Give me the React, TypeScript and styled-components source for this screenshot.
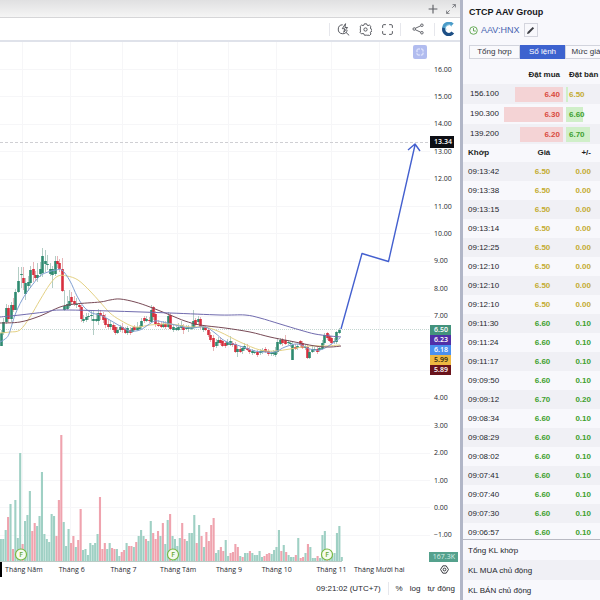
import React from "react";
import styled, { createGlobalStyle } from "styled-components";

const Global = createGlobalStyle`
  * { box-sizing: border-box; }
  body { margin: 0; background: #fff; color: #25262c; font: 8px/12px "Liberation Sans", Arial, sans-serif; }
  button { font: inherit; color: inherit; border: 0; padding: 0; background: none; cursor: pointer; }
`;

const Page = styled.div`
  display: flex;
  min-height: 100vh;
  overflow: hidden;
`;
const ChartPane = styled.main`
  flex: 1;
  min-width: 0;
  display: flex;
  flex-direction: column;
`;
const WindowBar = styled.header`
  height: 18px;
  display: flex;
  align-items: center;
  justify-content: flex-end;
  gap: 6px;
  padding-right: 3px;
  background: linear-gradient(#e0e0e1, #f5f5f5);
  border-bottom: 1px solid #d6d6d8;
  color: #5c5e64;
`;
const Toolbar = styled.div`
  height: 24px;
  display: flex;
  align-items: center;
  justify-content: flex-end;
  border-bottom: 2px solid #dfe2ea;
  color: #55575e;
`;
const IconButton = styled.button<{ $w?: number }>`
  width: ${(p) => p.$w ?? 22}px;
  height: 14px;
  display: flex;
  align-items: center;
  justify-content: center;
`;
const Divider = styled.span<{ $gap?: number }>`
  width: 1px;
  height: 13px;
  margin: 0 ${(p) => p.$gap ?? 2}px;
  background: #e6e7ec;
`;
const ChartBody = styled.div`
  flex: 1;
  min-height: 520px;
  display: grid;
  grid-template-columns: 1fr 30px;
`;
const Plot = styled.div`
  position: relative;
  min-width: 0;
`;
const PlotSvg = styled.svg`
  position: absolute;
  inset: 0;
  width: 100%;
  height: 100%;
`;
const PaneButton = styled.button`
  position: absolute;
  right: 3px;
  top: 3px;
  width: 14px;
  height: 14px;
  border-radius: 2px;
  background: #b1bcef;
  display: flex;
  align-items: center;
  justify-content: center;
`;
const PriceScale = styled.div`
  position: relative;
  display: grid;
  grid-auto-rows: 1fr;
  align-items: center;
  padding: 14px 0 13px 4px;
  font: 500 7px/10px "Open Sans", sans-serif;
`;
const TagStack = styled.div<{ $top: number; $w?: number }>`
  position: absolute;
  left: 0;
  top: ${(p) => p.$top}%;
  width: ${(p) => p.$w ?? 21}px;
  font-weight: 600;
`;
const Tag = styled.div<{ $bg: string; $fg?: string; $h?: number }>`
  height: ${(p) => p.$h ?? 10}px;
  line-height: ${(p) => p.$h ?? 10}px;
  padding-left: 4px;
  background: ${(p) => p.$bg};
  color: ${(p) => p.$fg ?? "#fff"};
`;
const VolumeTag = styled.div`
  position: absolute;
  right: 2px;
  bottom: 0;
  width: 29px;
  height: 10px;
  padding-right: 3px;
  text-align: right;
  background: #55a18d;
  color: #d9f0e8;
`;
const TimeAxis = styled.div`
  height: 15px;
  display: grid;
  grid-template-columns:
    minmax(0, 44fr) minmax(0, 52fr) minmax(0, 52fr) minmax(0, 58fr) minmax(0, 44fr)
    minmax(0, 52fr) minmax(0, 58fr) minmax(0, 38fr) minmax(0, 32fr) 30px;
  align-items: center;
  justify-items: center;
  white-space: nowrap;
  border-left: 2px solid #000;
  font: 500 7px/12px "Open Sans", sans-serif;
`;
const AxisGear = styled.button`
  grid-column: 10;
  display: flex;
`;
const StatusBar = styled.footer`
  height: 23px;
  display: flex;
  align-items: center;
  justify-content: flex-end;
  gap: 7px;
  padding-right: 5px;
`;
const Splitter = styled.div`
  width: 3px;
  background: #b1b6c7;
`;
const SidePanel = styled.aside`
  width: 137px;
  flex: none;
  display: flex;
  flex-direction: column;
  overflow: hidden;
  background: #f8f8fc;
`;
const Title = styled.h1`
  margin: 6px 0 5px 6px;
  font-size: 9px;
  line-height: 12px;
  color: #15161b;
`;
const SymbolRow = styled.div`
  display: flex;
  align-items: center;
  height: 14px;
  margin-left: 6px;
  gap: 3px;
  font-size: 9px;
`;
const SymbolLink = styled.a`
  color: #4763b0;
  text-decoration: none;
`;
const EditButton = styled.button`
  width: 14px;
  height: 14px;
  margin-left: 1px;
  border: 1px solid #d4d5de;
  display: flex;
  align-items: center;
  justify-content: center;
`;
const Tabs = styled.div`
  display: flex;
  flex: none;
  margin: 8px 0 7px 6px;
`;
const Tab = styled.button<{ $w: number; $on?: boolean }>`
  flex: 0 0 ${(p) => p.$w}px;
  height: 14px;
  line-height: 12px;
  white-space: nowrap;
  border: 1px solid ${(p) => (p.$on ? "#3d63cf" : "#d2d4dd")};
  background: ${(p) => (p.$on ? "#3d63cf" : "#f9f9fc")};
  color: ${(p) => (p.$on ? "#fff" : "#33353c")};
`;
const Table = styled.table`
  flex: none;
  width: 100%;
  border-collapse: collapse;
  table-layout: fixed;
  white-space: nowrap;
  th, td { padding: 0; }
`;
const HeadCell = styled.th<{ $align?: string; $pad?: number }>`
  && {
    height: 18px;
    text-align: ${(p) => p.$align ?? "left"};
    padding-left: ${(p) => (p.$align ? 0 : p.$pad ?? 5)}px;
    padding-right: ${(p) => (p.$align ? p.$pad ?? 0 : 0)}px;
    color: #1c1d22;
  }
`;
const BookRow = styled.tr`
  height: 20px;
  &:nth-child(odd) { background: #f0f0f5; }
`;
const TradeRow = styled.tr`
  height: 19px;
  &:nth-child(odd) { background: #f0f0f5; }
`;
const TextCell = styled.td<{ $pad?: number }>`
  && { padding-left: ${(p) => p.$pad ?? 5}px; }
`;
const tone = { ref: "#c4ac32", up: "#3fa02f", down: "#d94a40" };
type Tone = keyof typeof tone;
const NumberCell = styled.td<{ $tone: Tone; $pad?: number }>`
  && { padding-right: ${(p) => p.$pad ?? 0}px; }
  text-align: right;
  font-weight: bold;
  color: ${(p) => tone[p.$tone]};
`;
const Depth = styled.div<{ $side: "bid" | "ask"; $size: number; $tone: Tone }>`
  height: 15px;
  line-height: 15px;
  font-weight: bold;
  color: ${(p) => tone[p.$tone]};
  text-align: ${(p) => (p.$side === "bid" ? "right" : "left")};
  padding: 0 3px;
  margin-right: ${(p) => (p.$side === "bid" ? 1 : 0)}px;
  margin-left: ${(p) => (p.$side === "bid" ? 0 : 2)}px;
  background: linear-gradient(${(p) => (p.$side === "bid" ? "#f4d3d5, #f4d3d5" : "#d0efc9, #d0efc9")})
    ${(p) => (p.$side === "bid" ? "right" : "left")} / ${(p) => p.$size}px 100% no-repeat;
`;
const TradeArea = styled.div`
  flex: 1 0 395px;
  height: 395px;
  overflow: hidden;
`;
const Totals = styled.div`
  flex: none;
  border-top: 1px solid #b9bac3;
  background: #f8f8fc;
`;
const TotalRow = styled.div`
  height: 20px;
  line-height: 22px;
  padding-left: 5px;
  &:nth-child(even) { background: #f0f0f5; }
`;

const months: [string, number][] = [
  ["Tháng Năm", 22], ["Tháng 6", 70], ["Tháng 7", 122], ["Tháng Tám", 177],
  ["Tháng 9", 228], ["Tháng 10", 276], ["Tháng 11", 331], ["Tháng Mười hai", 379],
];

const volume =
  "g22 g22 g31 r44 g57 r12 g61 g23 g108 r17 g40 g46 g70 r30 r38 g35 g45 g89 g27 g22 g19 g47 g45 r25 r61 r126 g39 g15 g32 r18 r25 g14 r21 r52 g11 g12 g6 g18 g16 g18 g27 r64 r12 r18 g12 g18 r13 r12 g12 g5 r9 r11 g18 r15 r15 g14 r19 g25 g31 g25 r22 g20 g40 r28 r22 r30 g25 r38 g17 g41 r47 g25 g22 g15 g23 r38 r22 g20 g28 g28 g46 r18 g36 r25 g14 r29 r20 r36 r43 g8 g11 r14 r10 g21 g5 r8 r9 r17 r14 g5 r4 g8 g8 r10 g8 g6 g6 g10 g4 r5 r7 r8 g7 g11 g14 g31 r10 g16 r9 g6 g4 g4 r6 g23 r3 r4 g8 r17 g14 g3 g3 r5 g3 g26 g30 r10 g5 g5 g8 g28 g35 g4".split(" ");

// x, direction, body top, body bottom, wick top, wick bottom
const candles: [number, string, number, number, number, number][] = [
  [1,"g",333,346,330,346],[3,"g",322,333,318,335],[6,"g",308,322,304,324],[8,"r",308,319,305,323],[11,"g",305,319,302,322],[13,"r",305,310,298,312],
  [15,"g",292,310,289,310],[18,"g",281,292,267,293],[21,"g",274,275,267,288],[23,"r",278,283,267,290],[25,"g",283,294,278,300],[28,"g",282,286,276,291],
  [30,"g",270,283,266,288],[33,"r",269,275,262,282],[35,"r",275,278,271,281],[37,"g",275,278,263,282],[40,"g",269,274,262,277],[42,"g",256,273,248,277],
  [45,"g",261,264,250,272],[47,"g",264,265,255,270],[50,"g",269,274,263,276],[52,"g",269,275,266,288],[55,"g",261,274,256,276],[57,"r",261,264,256,268],
  [59,"r",263,269,259,272],[62,"r",269,291,258,292],[64,"g",306,310,290,311],[67,"g",304,309,296,310],[69,"g",301,306,290,308],[71,"r",297,302,292,305],
  [74,"r",301,304,296,306],[76,"g",304,305,298,308],[79,"r",305,307,303,311],[81,"r",307,319,305,322],[83,"g",319,321,315,323],[86,"g",317,320,313,322],
  [88,"g",316,317,313,320],[91,"g",315,316,311,321],[93,"g",319,321,310,335],[96,"g",319,321,313,322],[98,"g",313,321,309,325],[100,"r",313,316,310,320],
  [103,"r",315,320,312,323],[105,"r",318,325,314,328],[108,"r",324,327,319,329],[110,"g",324,327,320,329],[113,"r",325,330,323,332],[115,"r",327,333,325,335],
  [117,"g",330,333,327,334],[120,"g",327,330,325,332],[122,"r",327,330,323,333],[125,"r",329,333,327,334],[127,"g",328,333,326,335],[130,"r",330,333,327,335],
  [132,"g",328,332,327,333],[134,"r",327,330,325,331],[137,"g",327,330,322,331],[139,"g",327,329,325,330],[141,"g",321,327,318,329],[144,"r",318,321,316,323],
  [146,"g",319,321,316,322],[149,"r",320,321,317,323],[151,"g",310,322,305,323],[153,"r",307,317,306,320],[155,"r",314,324,311,327],[158,"r",323,326,320,327],
  [161,"r",324,327,322,328],[163,"g",324,327,321,328],[165,"r",324,327,321,329],[168,"g",316,327,312,328],[170,"r",315,329,313,330],[173,"g",327,330,324,332],
  [176,"g",328,330,326,331],[178,"g",327,330,323,331],[181,"g",325,328,321,330],[183,"r",327,330,324,334],[186,"g",328,329,325,330],[188,"g",327,329,325,332],
  [191,"g",327,329,323,330],[193,"g",321,328,310,329],[195,"r",320,325,318,327],[198,"g",319,322,316,324],[200,"r",319,327,317,329],[203,"g",327,330,325,332],
  [205,"r",327,330,325,331],[208,"r",330,335,328,337],[210,"r",335,340,332,342],[213,"r",338,347,335,351],[216,"g",342,346,339,348],[218,"g",340,343,337,346],
  [220,"r",340,343,337,345],[222,"r",341,346,339,347],[225,"r",343,346,341,348],[227,"g",342,345,339,346],[230,"g",341,345,336,346],[232,"r",343,345,341,347],
  [235,"r",344,352,342,353],[237,"g",349,352,346,357],[240,"r",349,352,346,353],[242,"g",348,351,346,354],[244,"g",346,349,343,351],[247,"r",348,350,344,351],
  [249,"r",350,352,347,354],[252,"g",351,353,349,355],[254,"g",352,353,350,354],[257,"r",352,355,350,357],[260,"g",351,353,349,355],[262,"g",350,352,348,354],
  [265,"r",349,352,347,353],[268,"r",351,354,349,356],[271,"g",353,354,351,356],[273,"g",352,354,350,356],[275,"g",351,355,347,357],[277,"g",342,352,338,354],
  [280,"g",340,344,338,345],[282,"r",340,343,338,346],[285,"r",340,344,335,345],[288,"g",342,343,340,345],[290,"g",343,344,341,347],[292,"g",345,360,342,360],
  [295,"r",347,349,344,350],[297,"g",346,348,344,350],[300,"r",341,345,340,348],[302,"r",343,348,341,349],[305,"g",347,348,344,350],[307,"r",347,358,345,359],
  [309,"g",352,358,349,359],[312,"g",349,352,346,353],[314,"g",349,350,347,352],[317,"r",349,352,347,354],[319,"g",348,350,346,352],[322,"g",343,349,340,350],
  [324,"g",335,343,333,345],[327,"r",333,338,332,340],[329,"r",336,341,334,342],[331,"r",338,343,336,345],[334,"g",341,342,338,344],[336,"g",332,342,331,344],[339,"g",330,333,328,334],
];

type Pt = [number, number];
const averages: { color: string; pts: Pt[] }[] = [
  { color: "#e4d184", pts: [[0,333],[10,332],[20,330],[30,317],[40,300],[50,284],[58,276],[67,276],[78,280],[90,291],[100,302],[110,313],[120,320],[135,327],[150,325],[170,324],[190,327],[205,327],[220,332],[240,342],[260,350],[275,351],[290,349],[310,346],[325,346],[340,345]] },
  { color: "#7f9fd2", pts: [[0,342],[5,339],[9,334],[15,315],[22,300],[30,288],[40,276],[48,272],[56,270],[62,270],[70,281],[77,296],[84,307],[92,313],[100,315],[108,319],[120,326],[130,331],[140,330],[148,325],[155,321],[163,322],[175,325],[190,328],[205,327],[215,333],[225,341],[240,346],[255,351],[265,352],[275,352],[285,347],[298,344],[310,349],[320,350],[330,345],[340,338]] },
  { color: "#784a56", pts: [[0,323],[20,322],[40,316],[60,307],[75,304],[100,302],[110,300],[120,299],[135,302],[150,307],[170,315],[185,321],[200,325],[225,328],[250,332],[270,337],[290,341],[315,346],[330,347],[341,346]] },
  { color: "#706bae", pts: [[0,317],[20,315],[45,312],[60,310],[110,311],[170,313],[220,315],[245,315],[260,318],[280,324],[300,330],[315,334],[330,336],[341,337]] },
];

const smooth = (pts: Pt[]) =>
  pts.reduce((d, [x, y], i) => {
    if (i === 0) return `M${x} ${y}`;
    const a = pts[i - 2] ?? pts[i - 1];
    const b = pts[i - 1];
    const c = pts[i + 1] ?? pts[i];
    return `${d}C${b[0] + (x - a[0]) / 6} ${b[1] + (y - a[1]) / 6} ${x - (c[0] - b[0]) / 6} ${y - (c[1] - b[1]) / 6} ${x} ${y}`;
  }, "");

const Chart = () => (
  <PlotSvg viewBox="0 42 430 520" preserveAspectRatio="none" fill="none" role="img" aria-label="AAV:HNX">
    <g stroke="#f6f6f8">
      {Array.from({ length: 18 }, (_, i) => <path key={i} d={`M0 ${Math.round(69 + i * 27.4) + 0.5}H430`} />)}
      {months.map(([m, x]) => <path key={m} d={`M${x + 0.5} 42V562`} />)}
    </g>
    <path d="M0 142.5H430" stroke="#cfcfd3" strokeDasharray="3 2" />
    <path d="M0 329.5H430" stroke="#c4d6d1" strokeDasharray="1 1" />
    {volume.map((v, i) => (
      <rect key={i} x={i * 2.418 - 0.2} y={561 - +v.slice(1)} width="2.1" height={+v.slice(1)} fill={v[0] === "g" ? "#9fd0c4" : "#efa3ae"} />
    ))}
    {candles.map(([x, c, t, b, wt, wb]) => (
      <g key={x} fill={c === "g" ? "#2f8a70" : "#d8303f"} stroke={c === "g" ? "#9fc0b6" : "#dfa3a6"}>
        <path d={`M${x + 0.5} ${wt}V${wb}`} strokeWidth="0.8" />
        <rect x={x - 0.8} y={t} width="2.6" height={b - t} stroke="none" />
      </g>
    ))}
    {averages.map((a) => <path key={a.color} d={smooth(a.pts)} stroke={a.color} />)}
    <path d="M341 329L362 253.5L388.5 261.5L415 145M408 150L415 144L420 151" stroke="#4460cf" strokeWidth="1.4" strokeLinejoin="round" />
    {[21, 173, 327].map((x) => (
      <g key={x}>
        <circle cx={x} cy="554.5" r="5.5" fill="#f5fbef" stroke="#78b843" strokeWidth="1.2" />
        <text x={x} y="557" textAnchor="middle" fontSize="7" fontWeight="600" fontFamily="Open Sans, sans-serif" fill="#65a732">F</text>
      </g>
    ))}
    <path d="M0 561.5H342" stroke="#b9cbc5" />
  </PlotSvg>
);

const svg = (size: number, children: React.ReactNode) => (
  <svg width={size} height={size} viewBox="0 0 16 16" fill="none" stroke="currentColor" strokeWidth="1.2" aria-hidden="true">{children}</svg>
);
const gear = <><path d="M6.6 1h2.8l.6 1.7 1.1.5 1.700-.7 1.900 1.900-.7 1.700.4 1.100 1.600.8v2l-1.600.8-.4 1.100.7 1.700-1.900 1.900-1.700-.7-1.100.5L9.400 15H6.600L6 13.300l-1.100-.5-1.700.7-1.900-1.900.7-1.700-.4-1.100V7.200L2 6.100l-.7-1.700 1.900-1.900 1.700.7L6 2.700z" /><circle cx="8" cy="8" r="2" /></>;

const prices = Array.from({ length: 18 }, (_, i) => 16 - i);
const label = (p: number) => (p === 6 || p === 5 ? "" : `${p < 0 ? "−" : ""}${Math.abs(p)}.00`);

const book: [string, string, number, string, number, Tone][] = [
  ["156.100", "6.40", 48, "6.50", 2, "ref"],
  ["190.300", "6.30", 59, "6.60", 17, "up"],
  ["139.200", "6.20", 43, "6.70", 24, "up"],
];
const trades: [string, string, string][] = [
  ...["13:42", "13:38", "13:15", "13:14", "12:25", "12:10", "12:10", "12:10"].map((t) => [t, "6.50", "0.00"] as [string, string, string]),
  ...["11:30", "11:24", "11:17", "09:50"].map((t) => [t, "6.60", "0.10"] as [string, string, string]),
  ["09:12", "6.70", "0.20"],
  ...["08:34", "08:29", "08:02", "07:41", "07:40", "07:30", "06:57"].map((t) => [t, "6.60", "0.10"] as [string, string, string]),
];

export default function App() {
  return (
    <Page>
      <Global />
      <ChartPane>
        <WindowBar>
          <IconButton $w={12} aria-label="Thêm">{svg(10, <path d="M8 1v14M1 8h14" strokeWidth="1.8" />)}</IconButton>
          <IconButton $w={12} aria-label="Mở rộng">{svg(10, <path d="M10 6l5-5M10.5 1H15v4.5M6 10l-5 5M1 10.5V15h4.5" />)}</IconButton>
        </WindowBar>
        <Toolbar>
          <Divider />
          <IconButton aria-label="Tìm nhanh">{svg(13, <><path d="M7 2.2A5.500 5.500 0 1 0 12.500 8.500M11 11.500l4 3.800" /><path d="M10.500.8L6.500 7h3L8.300 11.500 13 5.500H9.800z" /></>)}</IconButton>
          <IconButton aria-label="Cài đặt">{svg(13, gear)}</IconButton>
          <IconButton aria-label="Toàn màn hình">{svg(13, <path d="M2 6V3.500Q2 2 3.500 2H6M10 2h2.500Q14 2 14 3.500V6M14 10v2.500q0 1.500-1.500 1.500H10M6 14H3.500Q2 14 2 12.500V10" />)}</IconButton>
          <Divider />
          <IconButton $w={30} aria-label="Chia sẻ">{svg(12, <><path d="M4.500 7l7.200-3.300M4.500 9l7.200 3.300" /><circle cx="3" cy="8" r="1.700" /><circle cx="13.200" cy="3" r="1.700" /><circle cx="13.200" cy="13" r="1.700" /></>)}</IconButton>
          <Divider $gap={1} />
          <IconButton $w={24} aria-label="Logo">
            <svg width="14" height="14" viewBox="0 0 14 14" fill="none" aria-hidden="true">
              <path d="M11.500 2.800A5 5 0 0 0 3 7" stroke="#4b9cc9" strokeWidth="3.400" />
              <path d="M3 6a5 5 0 0 0 8.800 4.500" stroke="#1d4f85" strokeWidth="3.400" />
              <path d="M10.800 4.300A3.400 3.400 0 0 0 5 8" stroke="#8cc7e2" />
            </svg>
          </IconButton>
        </Toolbar>
        <ChartBody>
          <Plot>
            <Chart />
            <PaneButton aria-label="Khung">
              <svg width="8" height="8" viewBox="0 0 8 8" fill="none" stroke="#edf0ff" aria-hidden="true"><rect x="1" y="1" width="6" height="6" rx="1" strokeDasharray="4 1" strokeDashoffset="2" /></svg>
            </PaneButton>
          </Plot>
          <PriceScale>
            {prices.map((p) => <span key={p}>{label(p)}</span>)}
            <TagStack $top={18} $w={24}><Tag $bg="#0d0e14" $h={12}>13.34</Tag></TagStack>
            <TagStack $top={54.4}>
              <Tag $bg="#43927c">6.50</Tag>
              <Tag $bg="#5030a8">6.23</Tag>
              <Tag $bg="#4a90ef">6.18</Tag>
              <Tag $bg="#edb842" $fg="#2c2410">5.99</Tag>
              <Tag $bg="#6a141c">5.89</Tag>
            </TagStack>
            <VolumeTag>167.3K</VolumeTag>
          </PriceScale>
        </ChartBody>
        <TimeAxis>
          {months.map(([m]) => <span key={m}>{m}</span>)}
          <AxisGear aria-label="Cài đặt trục">{svg(9, <><path d="M5 1.500h6L15 8l-4 6.500H5L1 8z" strokeWidth="1.600" /><circle cx="8" cy="8" r="2.500" strokeWidth="1.600" /></>)}</AxisGear>
        </TimeAxis>
        <StatusBar>
          <button>09:21:02 (UTC+7)</button>
          <Divider $gap={0} />
          <button>%</button>
          <button>log</button>
          <button>tự động</button>
        </StatusBar>
      </ChartPane>
      <Splitter />
      <SidePanel>
        <Title>CTCP AAV Group</Title>
        <SymbolRow>
          <svg width="9" height="9" viewBox="0 0 9 9" fill="none" stroke="#67ab57" aria-hidden="true"><circle cx="4.5" cy="4.5" r="3.8" /><path d="M4.5 2v3h2.3" /></svg>
          <SymbolLink href="#">AAV:HNX</SymbolLink>
          <EditButton aria-label="Sửa">
            <svg width="9" height="9" viewBox="0 0 9 9" fill="#3b3c42" aria-hidden="true"><path d="M1 8l.6-2L6.700.9l1.400 1.400L3 7.400z" /></svg>
          </EditButton>
        </SymbolRow>
        <Tabs role="tablist">
          <Tab role="tab" $w={51}>Tổng hợp</Tab>
          <Tab role="tab" aria-selected $on $w={45}>Sổ lệnh</Tab>
          <Tab role="tab" $w={42}>Mức giá</Tab>
        </Tabs>
        <Table>
          <colgroup><col style={{ width: 38 }} /><col style={{ width: 63 }} /><col /></colgroup>
          <thead><tr><HeadCell /><HeadCell $align="right" $pad={4}>Đặt mua</HeadCell><HeadCell>Đặt bán</HeadCell></tr></thead>
          <tbody>
            {book.map(([vol, bid, bw, ask, aw, t]) => (
              <BookRow key={vol}>
                <TextCell $pad={7}>{vol}</TextCell>
                <td><Depth $side="bid" $size={bw} $tone="down">{bid}</Depth></td>
                <td><Depth $side="ask" $size={aw} $tone={t}>{ask}</Depth></td>
              </BookRow>
            ))}
          </tbody>
        </Table>
        <TradeArea>
          <Table>
            <thead><tr><HeadCell>Khớp</HeadCell><HeadCell $align="right" $pad={4}>Giá</HeadCell><HeadCell $align="right" $pad={9}>+/-</HeadCell></tr></thead>
            <tbody>
              {trades.map(([time, price, diff], i) => {
                const t: Tone = diff === "0.00" ? "ref" : "up";
                return (
                  <TradeRow key={i}>
                    <TextCell>09:{time}</TextCell>
                    <NumberCell $tone={t} $pad={4}>{price}</NumberCell>
                    <NumberCell $tone={t} $pad={9}>{diff}</NumberCell>
                  </TradeRow>
                );
              })}
            </tbody>
          </Table>
        </TradeArea>
        <Totals>
          <TotalRow>Tổng KL khớp</TotalRow>
          <TotalRow>KL MUA chủ động</TotalRow>
          <TotalRow>KL BÁN chủ động</TotalRow>
        </Totals>
      </SidePanel>
    </Page>
  );
}
